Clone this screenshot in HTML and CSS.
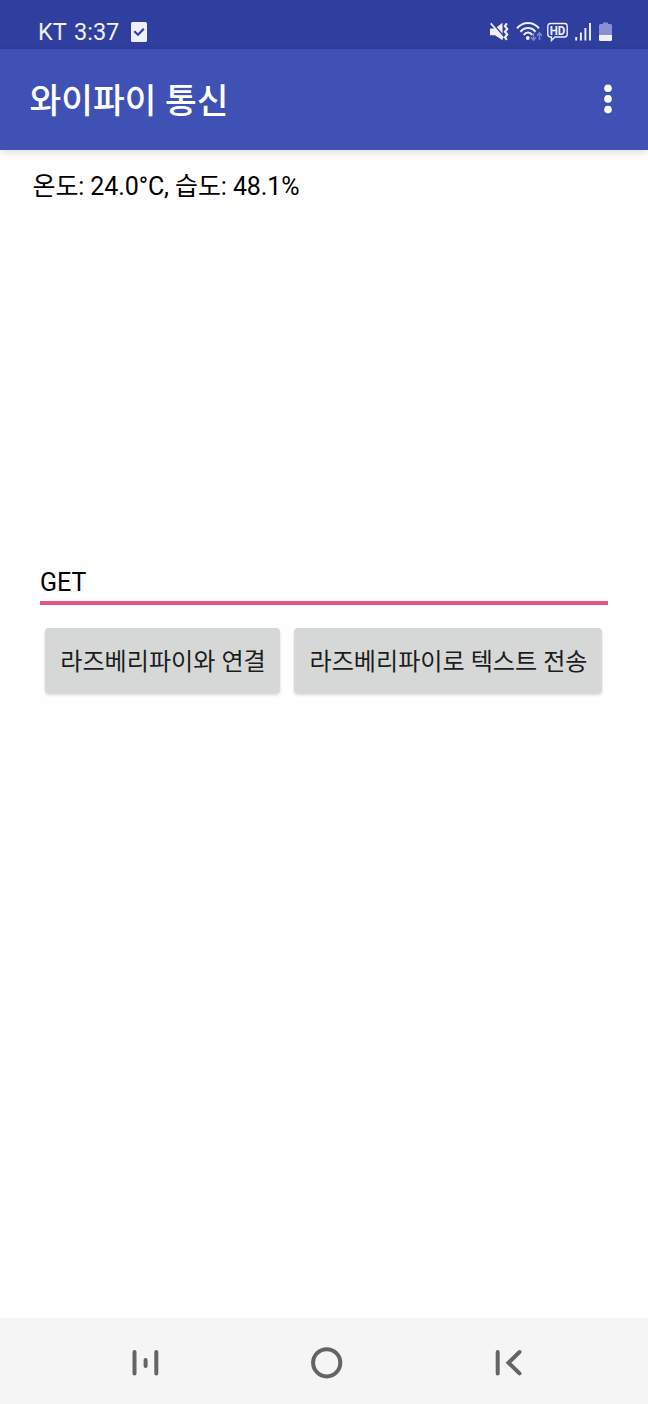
FILE: index.html
```html
<!DOCTYPE html>
<html lang="ko">
<head>
<meta charset="utf-8">
<title>와이파이 통신</title>
<link rel="stylesheet" href="styles.css">
</head>
<body>
<div class="screen">
  <div class="status">
    <span class="carrier">KT</span>
    <span class="clock">3:37</span>
    <svg class="task" width="16" height="20" viewBox="0 0 16 20"><rect width="16" height="20" rx="1.5" fill="#eff0fc"/><path d="M3.3 9.2 7 12.8 12.8 6.8" fill="none" stroke="#303f9f" stroke-width="2.2"/></svg>
    <div class="indicators">
      <svg width="19" height="20" viewBox="0 0 19 20"><path d="M0 6.5H5L12.5 .8V18.2L5 13.3H0Z" fill="#eff0fc"/><path d="M1.5 0 14.5 15.2" stroke="#303f9f" stroke-width="1.6"/><path d="M.8 1.4 13.3 16" stroke="#eff0fc" stroke-width="1.7"/><path d="M16.8 1.3l-1.8 2.8 2.2 2.8-2.2 2.8 2.2 2.8-2.2 2.8 1.8 2.6" fill="none" stroke="#eff0fc" stroke-width="2.2"/></svg>
      <svg width="27" height="20" viewBox="0 0 27 20"><g fill="none" stroke="#eff0fc" stroke-width="2"><path d="M1 6.3C7 -.7 17 -.7 23 6.3"/><path d="M4.5 9.8C8.5 4.8 15.5 4.8 19.5 9.8"/><path d="M7.8 13C10 9.8 14 9.8 16.2 13"/></g><circle cx="11.8" cy="16" r="1.9" fill="#eff0fc"/><path d="M17.5 11V18M15 15.3l2.5 2.8 2.5-2.8M23.5 18V11M21 13.7l2.5-2.8 2.5 2.8" fill="none" stroke="#7f88cf" stroke-width="1.4"/></svg>
      <svg width="21" height="20" viewBox="0 0 21 20"><path d="M3.5 1.5H17.5Q20.2 1.5 20.2 4.2V12.3Q20.2 15 17.5 15H8L4.5 18.5V15H3.5Q.8 15 .8 12.3V4.2Q.8 1.5 3.5 1.5Z" fill="none" stroke="#eff0fc" stroke-width="1.4"/><text class="hd" x="10.5" y="12.9" text-anchor="middle" textLength="15.6" lengthAdjust="spacingAndGlyphs">HD</text></svg>
      <svg width="17" height="20" viewBox="0 0 17 20"><path d="M1.2 15V18.5M5.9 10.5V18.5M10.4 6V18.5M15 1V18.5" stroke="#eff0fc" stroke-width="1.9"/></svg>
      <svg width="13" height="20" viewBox="0 0 13 20"><path d="M4 .5H9V2H11.5Q13 2 13 3.5V13H0V3.5Q0 2 1.5 2H4Z" fill="#8990d3"/><path d="M0 13H13V17.5Q13 19 11.5 19H1.5Q0 19 0 17.5Z" fill="#eff0fc"/></svg>
    </div>
  </div>
  <header class="appbar">
    <h1 class="title">와이파이 통신</h1>
    <svg width="8" height="30" viewBox="0 0 8 30" fill="#fff"><circle cx="4" cy="4.2" r="3.8"/><circle cx="4" cy="14.9" r="3.8"/><circle cx="4" cy="25.6" r="3.8"/></svg>
  </header>
  <main class="content">
    <div class="reading">온도: 24.0°C, 습도: 48.1%</div>
    <div class="field">GET</div>
    <div class="actions">
      <button class="btn connect">라즈베리파이와 연결</button>
      <button class="btn send">라즈베리파이로 텍스트 전송</button>
    </div>
  </main>
  <nav class="navbar">
    <svg width="27" height="32" viewBox="0 0 27 32"><path d="M2.5 5V26.4M13.6 12.9V18.9M24.3 5V26.4" class="stroke"/></svg>
    <svg width="32" height="32" viewBox="0 0 32 32"><circle cx="15.7" cy="15.8" r="13.6" class="stroke"/></svg>
    <svg width="27" height="32" viewBox="0 0 27 32"><path d="M2.7 5V26.4M24.5 5 13.5 15.7 24.5 26.4" class="stroke"/></svg>
  </nav>
</div>
</body>
</html>
```
FILE: styles.css
```css
* { box-sizing: border-box; }
body { margin: 0; background: #fff; font-family: Roboto, "Noto Sans CJK KR", sans-serif; }
svg { display: block; flex: none; }
.screen { display: flex; flex-direction: column; width: 648px; height: 1404px; background: #fefefe; }
.status { display: flex; flex: none; align-items: flex-start; height: 49px; padding: 22px 36px 0 38px; background: #303f9f; color: #eff0fc; font-size: 23.5px; line-height: 20px; }
.carrier { width: 36px; white-space: nowrap; }
.clock { width: 57px; }
.indicators { display: flex; margin-left: auto; }
.indicators svg:nth-child(2) { margin-left: 7px; }
.indicators svg:nth-child(3) { margin-left: 4px; }
.indicators svg:nth-child(4) { margin-left: 7px; }
.indicators svg:nth-child(5) { margin-left: 7px; }
.hd { font: bold 12.5px Roboto, sans-serif; fill: #eff0fc; }
.appbar { display: flex; flex: none; justify-content: space-between; align-items: center; height: 100.5px; padding: 0 36px 0 29.5px; background: #3f51b5; color: #fff; box-shadow: 0 2px 8px rgba(0, 0, 0, .14); }
.title { margin: 0; padding-top: 4px; font-size: 34.5px; font-weight: 500; line-height: 48px; }
.content { flex: 1; padding: 19.5px 40px 0; }
.reading { height: 390px; margin-left: -7.5px; color: #000; font-size: 25px; line-height: 36px; letter-spacing: -.1px; white-space: nowrap; }
.field { height: 46px; padding-top: 6px; border-bottom: 4px solid #e65186; color: #000; font-size: 25px; line-height: 36px; }
.actions { display: flex; gap: 14px; padding: 23px 0 0 5px; }
.btn { height: 65px; padding: 2px 0 0 1px; border: 0; border-radius: 4px; background: #d6d8d7; box-shadow: 0 2px 3px rgba(0, 0, 0, .16); color: #1d1d1d; font: 400 24.1px/36px Roboto, "Noto Sans CJK KR", sans-serif; white-space: nowrap; }
.connect { width: 235px; }
.send { width: 308px; }
.navbar { display: flex; flex: none; justify-content: space-between; align-items: center; height: 86px; padding: 4px 126px 0 132px; background: #f5f5f5; }
.stroke { fill: none; stroke: #646464; stroke-width: 4; stroke-linecap: round; }
```
